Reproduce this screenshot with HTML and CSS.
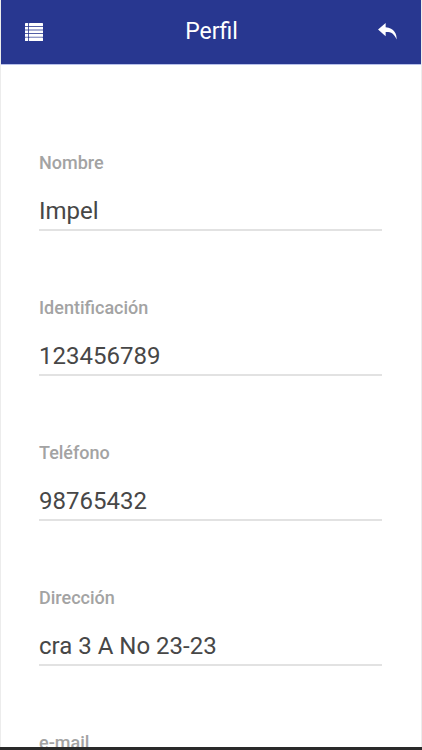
FILE: index.html
```html
<!DOCTYPE html>
<html lang="es">
<head>
    <meta charset="UTF-8">
    <meta name="viewport" content="width=device-width, initial-scale=1.0">
    <title>Perfil</title>
    <link rel="stylesheet" href="styles.css">
</head>
<body>
    <div class="app">
        <div class="header">
            <button class="header-btn">
                <svg viewBox="0 0 18 18" class="icon-list">
                    <rect x="0" y="0" width="3.2" height="3" rx="0.6"/>
                    <rect x="4" y="0" width="14" height="3" rx="0.6"/>
                    <rect x="0" y="3.8" width="3.2" height="2.8"/>
                    <rect x="4" y="3.8" width="14" height="2.8"/>
                    <rect x="0" y="7.4" width="3.2" height="2.8"/>
                    <rect x="4" y="7.4" width="14" height="2.8"/>
                    <rect x="0" y="11" width="3.2" height="2.8"/>
                    <rect x="4" y="11" width="14" height="2.8"/>
                    <rect x="0" y="14.6" width="3.2" height="3.4" rx="0.6"/>
                    <rect x="4" y="14.6" width="14" height="3.4" rx="0.6"/>
                </svg>
            </button>
            <h1 class="title">Perfil</h1>
            <button class="header-btn">
                <svg viewBox="0 0 24 20" class="icon-back">
                    <path d="M9 1 L1 8 L9 15 L9 10.5 C14.5 10.3 18 12 20.5 18.5 C21 13 18 6.2 9 5.6 Z"/>
                </svg>
            </button>
        </div>

        <div class="content">
            <div class="field">
                <label class="field-label">Nombre</label>
                <div class="field-value">Impel</div>
            </div>
            <div class="field">
                <label class="field-label">Identificación</label>
                <div class="field-value">123456789</div>
            </div>
            <div class="field">
                <label class="field-label">Teléfono</label>
                <div class="field-value">98765432</div>
            </div>
            <div class="field">
                <label class="field-label">Dirección</label>
                <div class="field-value">cra 3 A No 23-23</div>
            </div>
            <div class="field">
                <label class="field-label">e-mail</label>
                <div class="field-value">impel@impel.com</div>
            </div>
        </div>
    </div>
    <div class="bottom-edge"></div>
</body>
</html>
```

FILE: styles.css
```css
* {
    margin: 0;
    padding: 0;
    box-sizing: border-box;
}

body {
    font-family: Roboto, 'Noto Sans', sans-serif;
    background: #fff;
    color: #333;
    overflow: hidden;
}

.app {
    min-height: 100vh;
    border-left: 1px solid #ececec;
    border-right: 1px solid #ececec;
}

.header {
    height: 65px;
    background: #283790;
    border-bottom: 1px solid #b7c0ea;
    display: flex;
    align-items: center;
    justify-content: space-between;
    padding: 0 20px 1px 21px;
}

.header-btn {
    background: none;
    border: none;
    display: flex;
    align-items: center;
    justify-content: center;
    width: 24px;
    height: 24px;
}

.icon-list {
    width: 18px;
    height: 18px;
    fill: #fff;
}

.icon-back {
    width: 23px;
    height: 19px;
    fill: #fff;
}

.title {
    font-size: 23px;
    font-weight: 400;
    color: #fff;
    line-height: 30px;
}

.content {
    padding: 86px 39px 0 38px;
}

.field {
    margin-bottom: 65px;
    border-bottom: 2px solid #e2e2e2;
    padding-bottom: 3px;
}

.field-label {
    display: block;
    font-size: 18px;
    line-height: 24px;
    font-weight: 500;
    color: #a3a3a3;
}

.field-value {
    margin-top: 21px;
    font-size: 24px;
    line-height: 30px;
    color: #474747;
}

.bottom-edge {
    position: fixed;
    left: 0;
    right: 0;
    bottom: 0;
    height: 3px;
    background: #2a2a2a;
}
```
